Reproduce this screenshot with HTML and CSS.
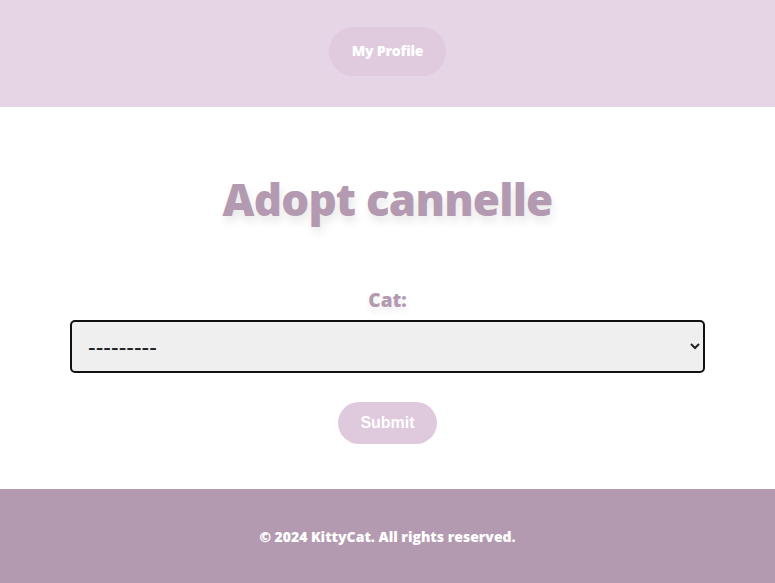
FILE: index.html
```html
<!DOCTYPE html>
<html>
<head>
<meta charset="utf-8">
<link rel="stylesheet" href="styles.css">
</head>
<body>
<header class="site-header">
  <a class="nav-btn" href="#">My Profile</a>
</header>
<main class="content">
  <h1 class="title">Adopt cannelle</h1>
  <form class="adopt-form">
    <label class="field-label" for="cat">Cat:</label>
    <select id="cat" class="field-select">
      <option>---------</option>
    </select>
    <button type="button" class="submit-btn">Submit</button>
  </form>
</main>
<footer class="site-footer">
  <p class="footer-text">© 2024 KittyCat. All rights reserved.</p>
</footer>
</body>
</html>
```
FILE: styles.css
```css
* { box-sizing: border-box; }
html, body { margin: 0; padding: 0; }
body {
  font-family: "Open Sans", "DejaVu Sans", sans-serif;
  background: #ffffff;
  width: 775px;
  height: 583px;
  display: flex;
  flex-direction: column;
}
.site-header {
  background: #e6d5e5;
  height: 107px;
  display: flex;
  justify-content: center;
  padding-top: 27px;
}
.nav-btn {
  display: flex;
  align-items: center;
  justify-content: center;
  width: 117px;
  height: 49px;
  border-radius: 25px;
  background: #dfcade;
  color: #ffffff;
  text-decoration: none;
  font-weight: 800;
  font-size: 14px;
  letter-spacing: -0.2px;
  padding-bottom: 2px;
}
.content {
  flex: 1;
  display: flex;
  flex-direction: column;
  align-items: center;
}
.title {
  margin: 62px 0 0;
  height: 60px;
  line-height: 60px;
  font-size: 44px;
  font-weight: 800;
  color: #b49ab1;
  letter-spacing: -0.8px;
  text-shadow: 2px 6px 9px rgba(0,0,0,0.09);
}
.adopt-form {
  margin-top: 57px;
  width: 635px;
  display: flex;
  flex-direction: column;
  align-items: center;
}
.field-label {
  font-size: 19px;
  font-weight: 800;
  color: #b49ab1;
  height: 28px;
  line-height: 28px;
  text-shadow: 1px 4px 7px rgba(0,0,0,0.09);
}
.field-select {
  margin-top: 6px;
  width: 635px;
  height: 53px;
  border: 2px solid #111;
  border-radius: 5px;
  background: #efefef;
  font-family: "Liberation Sans", Arial, sans-serif;
  font-size: 23px;
  color: #222;
  padding: 0 12px;
}
.submit-btn {
  margin-top: 29px;
  width: 99px;
  height: 42px;
  border: none;
  border-radius: 21px;
  background: #dfc9dd;
  color: #ffffff;
  font-family: "Liberation Sans", Arial, sans-serif;
  font-weight: 700;
  font-size: 16px;
}
.site-footer {
  height: 94px;
  background: #b49ab1;
  display: flex;
  align-items: center;
  justify-content: center;
}
.footer-text {
  margin: 0;
  color: #ffffff;
  font-weight: 800;
  font-size: 14px;
}
```
